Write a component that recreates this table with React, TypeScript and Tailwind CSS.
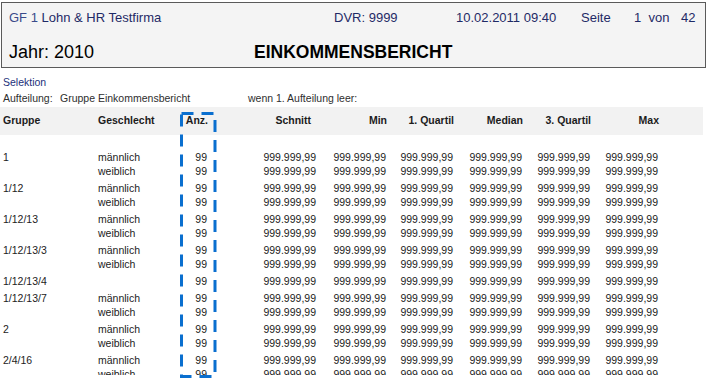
import React from "react";

type Row = { gruppe: string; geschlecht: string };

const groups: Row[][] = [
  [
    { gruppe: "1", geschlecht: "männlich" },
    { gruppe: "", geschlecht: "weiblich" },
  ],
  [
    { gruppe: "1/12", geschlecht: "männlich" },
    { gruppe: "", geschlecht: "weiblich" },
  ],
  [
    { gruppe: "1/12/13", geschlecht: "männlich" },
    { gruppe: "", geschlecht: "weiblich" },
  ],
  [
    { gruppe: "1/12/13/3", geschlecht: "männlich" },
    { gruppe: "", geschlecht: "weiblich" },
  ],
  [{ gruppe: "1/12/13/4", geschlecht: "" }],
  [
    { gruppe: "1/12/13/7", geschlecht: "männlich" },
    { gruppe: "", geschlecht: "weiblich" },
  ],
  [
    { gruppe: "2", geschlecht: "männlich" },
    { gruppe: "", geschlecht: "weiblich" },
  ],
  [
    { gruppe: "2/4/16", geschlecht: "männlich" },
    { gruppe: "", geschlecht: "weiblich" },
  ],
];

const VALUE = "999.999,99";

// widths of the value columns (right aligned)
const valueCols = ["w-[109px]", "w-[70px]", "w-[67px]", "w-[69px]", "w-[68px]", "w-[68px]"];

const DataRow = ({ row }: { row: Row }) => (
  <div className="flex h-[14px] items-center pl-[3px] text-[10.5px] leading-[14px] text-[#1c1c1c]">
    <div className="w-[95px] whitespace-nowrap">{row.gruppe}</div>
    <div className="w-[80px] whitespace-nowrap">{row.geschlecht}</div>
    <div className="w-[29px] text-right">99</div>
    {valueCols.map((w, i) => (
      <div key={i} className={w + " text-right whitespace-nowrap"}>
        {VALUE}
      </div>
    ))}
  </div>
);

const App = () => {
  return (
    <div
      className="relative w-[707px] h-[385px] overflow-hidden bg-white"
      style={{ fontFamily: '"Liberation Sans", Arial, sans-serif' }}
    >
      {/* report header box */}
      <div className="ml-[1px] mt-[2px] w-[705px] h-[66px] border border-[#5a5a5a] bg-[#f4f4f4]">
        <div className="flex mt-[7px] h-[16px] items-center text-[13px] leading-[16px] text-[#1f2a66] whitespace-nowrap">
          <span className="ml-[7px] w-[325px]">
            <span className="text-[#3a4a8a]">GF 1 </span>Lohn &amp; HR Testfirma
          </span>
          <span className="w-[122px]">DVR: 9999</span>
          <span className="w-[125px]">10.02.2011 09:40</span>
          <span className="w-[53px]">Seite</span>
          <span className="w-[47px] whitespace-pre">1  von</span>
          <span>42</span>
        </div>
        <div className="flex mt-[15px] h-[22px] items-center leading-[22px] text-black whitespace-nowrap">
          <span className="ml-[7px] w-[245px] text-[18px]">Jahr: 2010</span>
          <span className="text-[17.5px] font-bold">EINKOMMENSBERICHT</span>
        </div>
      </div>

      {/* selection */}
      <div className="mt-[7px] pl-[3px] text-[10.5px] leading-[14px] text-[#22307a]">Selektion</div>
      <div className="flex mt-[2px] pl-[3px] text-[10.5px] leading-[14px] text-[#2e2e2e] whitespace-nowrap">
        <span className="w-[57px]">Aufteilung:</span>
        <span className="w-[188px]">Gruppe Einkommensbericht</span>
        <span>wenn 1. Aufteilung leer:</span>
      </div>

      {/* table header */}
      <div className="flex mt-[2px] w-[703px] h-[28px] items-center bg-[#f2f2f2] pl-[3px] text-[10.5px] font-bold text-[#1c1c1c] whitespace-nowrap">
        <div className="w-[95px]">Gruppe</div>
        <div className="w-[80px]">Geschlecht</div>
        <div className="w-[30px] text-right">Anz.</div>
        <div className="w-[109px] text-right pr-[6px]">Schnitt</div>
        <div className="w-[70px] text-right">Min</div>
        <div className="w-[67px] text-right">1. Quartil</div>
        <div className="w-[69px] text-right">Median</div>
        <div className="w-[68px] text-right">3. Quartil</div>
        <div className="w-[68px] text-right">Max</div>
      </div>

      {/* table body */}
      <div className="mt-[15px] h-[225px] overflow-hidden">
        {groups.map((g, gi) => (
          <div key={gi} className="mb-[3px]">
            {g.map((row, ri) => (
              <DataRow key={ri} row={row} />
            ))}
          </div>
        ))}
      </div>

      {/* highlight around the Anz. column */}
      <svg className="absolute left-0 top-0 pointer-events-none" width="707" height="385">
        <rect
          x="181.5"
          y="113.5"
          width="33.5"
          height="263"
          fill="none"
          stroke="#0a6fcf"
          strokeWidth="3"
          strokeDasharray="12 8"
        />
      </svg>
    </div>
  );
};

export default App;
